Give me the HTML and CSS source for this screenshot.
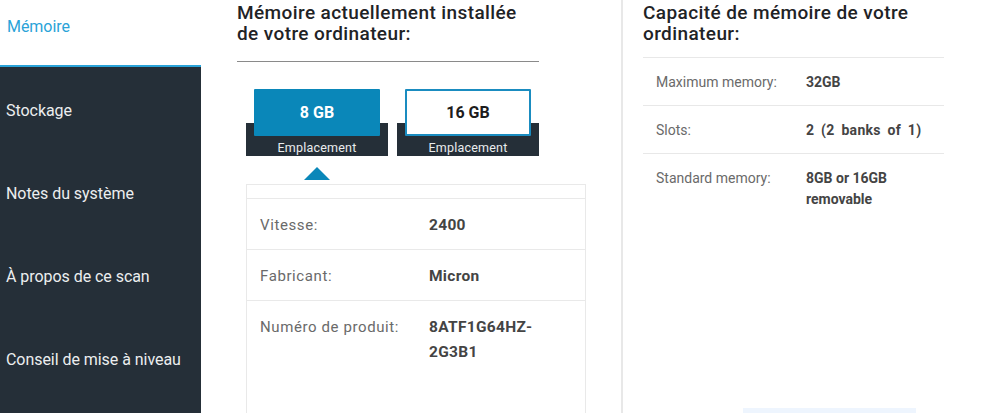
FILE: index.html
```html
<!DOCTYPE html>
<html lang="fr">
<head>
<meta charset="utf-8">
<title>Mémoire</title>
<link rel="stylesheet" href="styles.css">
</head>
<body>
<div class="page">
  <nav class="sidebar">
    <div class="nav-item active">Mémoire</div>
    <div class="nav-item">Stockage</div>
    <div class="nav-item">Notes du système</div>
    <div class="nav-item">À propos de ce scan</div>
    <div class="nav-item">Conseil de mise à niveau</div>
  </nav>
  <main class="content">
    <section class="col-left">
      <h2 class="heading heading-left">Mémoire actuellement installée de votre ordinateur:</h2>
      <div class="slots">
        <div class="slot selected">
          <div class="slot-box">8 GB</div>
          <div class="slot-base">Emplacement</div>
          <div class="slot-pointer"></div>
        </div>
        <div class="slot">
          <div class="slot-box">16 GB</div>
          <div class="slot-base">Emplacement</div>
        </div>
      </div>
      <div class="details">
        <div class="details-top"></div>
        <div class="drow"><div class="dlabel">Vitesse:</div><div class="dvalue">2400</div></div>
        <div class="drow"><div class="dlabel">Fabricant:</div><div class="dvalue">Micron</div></div>
        <div class="drow tall"><div class="dlabel">Numéro de produit:</div><div class="dvalue narrow">8ATF1G64HZ-2G3B1</div></div>
      </div>
    </section>
    <section class="col-right">
      <h2 class="heading heading-right">Capacité de mémoire de votre ordinateur:</h2>
      <div class="cap">
        <div class="crow"><div class="clabel">Maximum memory:</div><div class="cvalue">32GB</div></div>
        <div class="crow"><div class="clabel">Slots:</div><div class="cvalue wide">2 (2 banks of 1)</div></div>
        <div class="crow last"><div class="clabel">Standard memory:</div><div class="cvalue">8GB or 16GB removable</div></div>
      </div>
      <div class="more-btn"></div>
    </section>
  </main>
</div>
</body>
</html>
```

FILE: styles.css
```css
* { box-sizing: border-box; }
html, body { margin: 0; padding: 0; background: #fff; }
body {
  font-family: Roboto, "Liberation Sans", Arial, sans-serif;
  color: #333;
  overflow: hidden;
}
.page {
  display: flex;
  width: 1000px;
  height: 413px;
  overflow: hidden;
}
.sidebar {
  width: 201px;
  flex: none;
  background: #252f38;
  display: flex;
  flex-direction: column;
}
.nav-item {
  height: 83px;
  flex: none;
  display: flex;
  align-items: center;
  padding-left: 6px;
  padding-top: 4px;
  font-size: 16px;
  color: #eceeef;
  letter-spacing: -0.05px;
}
.nav-item.active {
  height: 67px;
  background: #fff;
  color: #2aa3d8;
  padding-top: 0;
  padding-bottom: 12px;
  padding-left: 7px;
  border-bottom: 2px solid #2aa3d8;
}
.content {
  flex: 1;
  display: flex;
}
.col-left {
  width: 422px;
  flex: none;
  padding: 2px 0 0 36px;
  border-right: 2px solid #e8e8e8;
}
.heading {
  margin: 0;
  font-size: 19px;
  line-height: 21px;
  font-weight: 500;
  letter-spacing: 0.4px;
  color: #1f2326;
}
.heading-left {
  width: 302px;
  padding-bottom: 17px;
  border-bottom: 1px solid #8a8a8a;
}
.slots {
  display: flex;
  gap: 9px;
  margin: 27px 0 0 9px;
}
.slot {
  width: 142px;
  display: flex;
  flex-direction: column;
  align-items: stretch;
}
.slot-box {
  position: relative;
  z-index: 1;
  margin: 0 8px;
  height: 47px;
  display: flex;
  align-items: center;
  justify-content: center;
  font-size: 16px;
  font-weight: 700;
  background: #fff;
  color: #1d1d1d;
  border: 2px solid #1a8cc0;
  border-radius: 1px;
}
.slot.selected .slot-box {
  background: #0a87b9;
  border-color: #0a87b9;
  color: #fff;
}
.slot-base {
  margin-top: -13px;
  height: 33px;
  padding-top: 16px;
  background: #252f38;
  color: #e9ecee;
  font-size: 12.5px;
  line-height: 17px;
  text-align: center;
  letter-spacing: 0.2px;
}
.slot-pointer {
  align-self: center;
  margin-top: 11px;
  width: 0;
  height: 0;
  border-left: 13px solid transparent;
  border-right: 13px solid transparent;
  border-bottom: 13px solid #0a87b9;
}
.details {
  margin: 4px 0 0 9px;
  width: 340px;
  border: 1px solid #e9e9e9;
  border-bottom: none;
  height: 240px;
}
.details-top {
  height: 14px;
  border-bottom: 1px solid #e9e9e9;
}
.drow {
  display: flex;
  padding: 14px 13px 11px;
  font-size: 15px;
  line-height: 25px;
  border-bottom: 1px solid #e9e9e9;
}
.drow.tall { border-bottom: none; }
.dlabel {
  width: 169px;
  flex: none;
  color: #6a6a6a;
  letter-spacing: 0.6px;
}
.dvalue {
  font-weight: 700;
  color: #444;
  font-size: 15.5px;
  letter-spacing: 0.3px;
}
.dvalue.narrow { width: 110px; word-break: break-word; }
.col-right {
  flex: 1;
  padding: 2px 0 0 20px;
}
.heading-right { width: 290px; }
.cap {
  margin-top: 13px;
  width: 301px;
  border-top: 1px solid #e8e8e8;
}
.crow {
  display: flex;
  padding: 14px 13px 12px;
  font-size: 14px;
  line-height: 21px;
  border-bottom: 1px solid #e8e8e8;
}
.crow.last { border-bottom: none; }
.clabel {
  width: 150px;
  flex: none;
  color: #6a6a6a;
}
.cvalue {
  font-weight: 700;
  color: #444;
  width: 120px;
}
.cvalue.wide { width: 130px; word-spacing: 3px; letter-spacing: 0.3px; }
.more-btn {
  margin: 186px 0 0 100px;
  width: 173px;
  height: 20px;
  background: #eef5fe;
}
```
